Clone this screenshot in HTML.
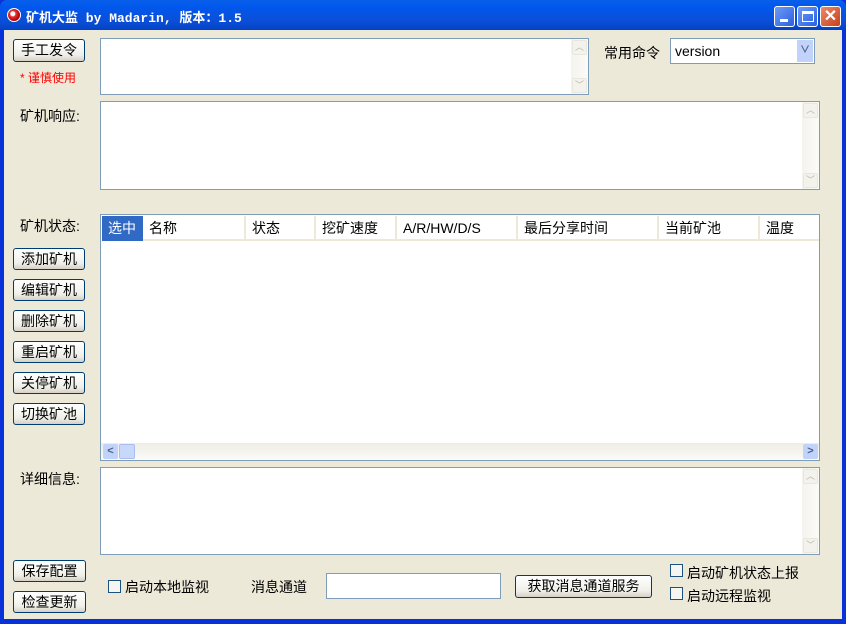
<!DOCTYPE html>
<html><head><meta charset="utf-8"><style>
*{box-sizing:border-box;margin:0;padding:0}
body{width:846px;height:624px;background:#0831d9;position:relative;overflow:hidden;font-family:"Liberation Sans","Noto Sans CJK SC",sans-serif;font-size:14px;color:#000}
.tb{position:absolute;left:0;top:0;width:846px;height:30px;background:linear-gradient(#0a5fe8,#0058ee 20%,#0b4fd8 70%,#0342c4);border-radius:7px 7px 0 0}
.title{position:absolute;left:26px;top:7px;color:#fff;font-weight:bold;font-size:13px;font-family:"Liberation Mono","Noto Sans CJK SC",monospace}
.ic{position:absolute;left:7px;top:8px;width:14px;height:14px;border-radius:50%;background:radial-gradient(circle at 40% 40%,#fff 0 2px,#e33 3px,#a00 7px);border:1px solid #fff}
.wb{position:absolute;top:6px;width:21px;height:21px;border:1px solid #fff;border-radius:3px;background:linear-gradient(135deg,#6f9bf5,#2a5fe0)}
.wb.c{background:linear-gradient(135deg,#ea8a6a,#c8401c)}
.client{position:absolute;left:4px;top:30px;width:838px;height:589px;background:#ece9d8}
.a{position:absolute;white-space:nowrap}
.btn{position:absolute;border:1px solid #003c74;border-radius:3px;background:linear-gradient(#fff,#f0f0ea 70%,#d6d0c5);text-align:center;line-height:20px;font-size:14px}
.box{position:absolute;background:#fff;border:1px solid #7f9db9}
.vs{position:absolute;right:0;top:0;bottom:0;width:17px;background:linear-gradient(90deg,#f4f3ee,#fbfbf8)}
.vs i{position:absolute;left:1px;width:15px;height:15px;border:1px solid #e8e6dd;border-radius:2px;background:#f3f2ec;color:#b9b7aa;font-size:9px;text-align:center;line-height:13px;font-style:normal}
.hd{position:absolute;top:1px;height:25px;line-height:25px;padding-left:6px;border-right:2px solid #ece9d8;border-bottom:2px solid #ece9d8}
.cb{position:absolute;width:13px;height:13px;border:1px solid #1c5180;background:#f5f5f2}
</style></head><body>
<div class="tb"><div class="ic"></div><div class="title">矿机大监 by Madarin, 版本：1.5</div>
<div class="wb" style="left:774px"><div style="position:absolute;left:5px;top:12px;width:8px;height:3px;background:#fff"></div></div>
<div class="wb" style="left:797px"><div style="position:absolute;left:4px;top:4px;width:12px;height:11px;border:1px solid #fff;border-top-width:3px"></div></div>
<div class="wb c" style="left:820px;color:#fff;font-weight:bold;font-size:16px;text-align:center;line-height:19px">✕</div>
</div>
<div class="client"></div>
<div class="btn" style="left:13px;top:39px;width:72px;height:23px">手工发令</div>
<div class="a" style="left:20px;top:69px;color:#f00;font-size:12px">* 谨慎使用</div>
<div class="box" style="left:100px;top:38px;width:489px;height:57px"><div class="vs"><i style="top:1px">︿</i><i style="bottom:1px">﹀</i></div></div>
<div class="a" style="left:604px;top:43px">常用命令</div>
<div class="box" style="left:670px;top:38px;width:145px;height:26px;padding:4px 0 0 4px">version<div style="position:absolute;right:1px;top:1px;width:16px;height:22px;background:#c1d3fb;color:#4d6185;font-size:10px;text-align:center;line-height:22px;font-weight:bold">∨</div></div>
<div class="a" style="left:20px;top:106px">矿机响应:</div>
<div class="box" style="left:100px;top:101px;width:720px;height:89px"><div class="vs"><i style="top:1px">︿</i><i style="bottom:1px">﹀</i></div></div>
<div class="a" style="left:20px;top:216px">矿机状态:</div>
<div class="box" style="left:100px;top:214px;width:720px;height:247px">
<div class="hd" style="left:1px;width:41px;background:#316ac5;color:#fff;border-color:#316ac5">选中</div>
<div class="hd" style="left:42px;width:103px">名称</div>
<div class="hd" style="left:145px;width:70px">状态</div>
<div class="hd" style="left:215px;width:81px">挖矿速度</div>
<div class="hd" style="left:296px;width:121px">A/R/HW/D/S</div>
<div class="hd" style="left:417px;width:141px">最后分享时间</div>
<div class="hd" style="left:558px;width:101px">当前矿池</div>
<div class="hd" style="left:659px;width:59px;border-right:0">温度</div>
<div style="position:absolute;left:0;right:0;bottom:0;height:17px;background:linear-gradient(#eeede5,#fbfbf8)">
<div style="position:absolute;left:2px;top:1px;width:15px;height:15px;background:#c1d3fb;border-radius:2px;color:#4d6185;font-size:11px;text-align:center;line-height:15px;font-weight:bold">&lt;</div>
<div style="position:absolute;left:18px;top:1px;width:16px;height:15px;background:#c8d8fb;border:1px solid #a9bdf0;border-radius:2px"></div>
<div style="position:absolute;right:1px;top:1px;width:15px;height:15px;background:#c1d3fb;border-radius:2px;color:#4d6185;font-size:11px;text-align:center;line-height:15px;font-weight:bold">&gt;</div>
</div></div>
<div class="btn" style="left:13px;top:248px;width:72px;height:22px">添加矿机</div>
<div class="btn" style="left:13px;top:279px;width:72px;height:22px">编辑矿机</div>
<div class="btn" style="left:13px;top:310px;width:72px;height:22px">删除矿机</div>
<div class="btn" style="left:13px;top:341px;width:72px;height:22px">重启矿机</div>
<div class="btn" style="left:13px;top:372px;width:72px;height:22px">关停矿机</div>
<div class="btn" style="left:13px;top:403px;width:72px;height:22px">切换矿池</div>
<div class="a" style="left:20px;top:469px">详细信息:</div>
<div class="box" style="left:100px;top:467px;width:720px;height:88px"><div class="vs"><i style="top:1px">︿</i><i style="bottom:1px">﹀</i></div></div>
<div class="btn" style="left:13px;top:560px;width:73px;height:22px">保存配置</div>
<div class="btn" style="left:13px;top:591px;width:73px;height:22px">检查更新</div>
<div class="cb" style="left:108px;top:580px"></div><div class="a" style="left:125px;top:577px">启动本地监视</div>
<div class="a" style="left:251px;top:577px">消息通道</div>
<div class="box" style="left:326px;top:573px;width:175px;height:26px"></div>
<div class="btn" style="left:515px;top:575px;width:137px;height:23px">获取消息通道服务</div>
<div class="cb" style="left:670px;top:564px"></div><div class="a" style="left:687px;top:563px">启动矿机状态上报</div>
<div class="cb" style="left:670px;top:587px"></div><div class="a" style="left:687px;top:586px">启动远程监视</div>
</body></html>
